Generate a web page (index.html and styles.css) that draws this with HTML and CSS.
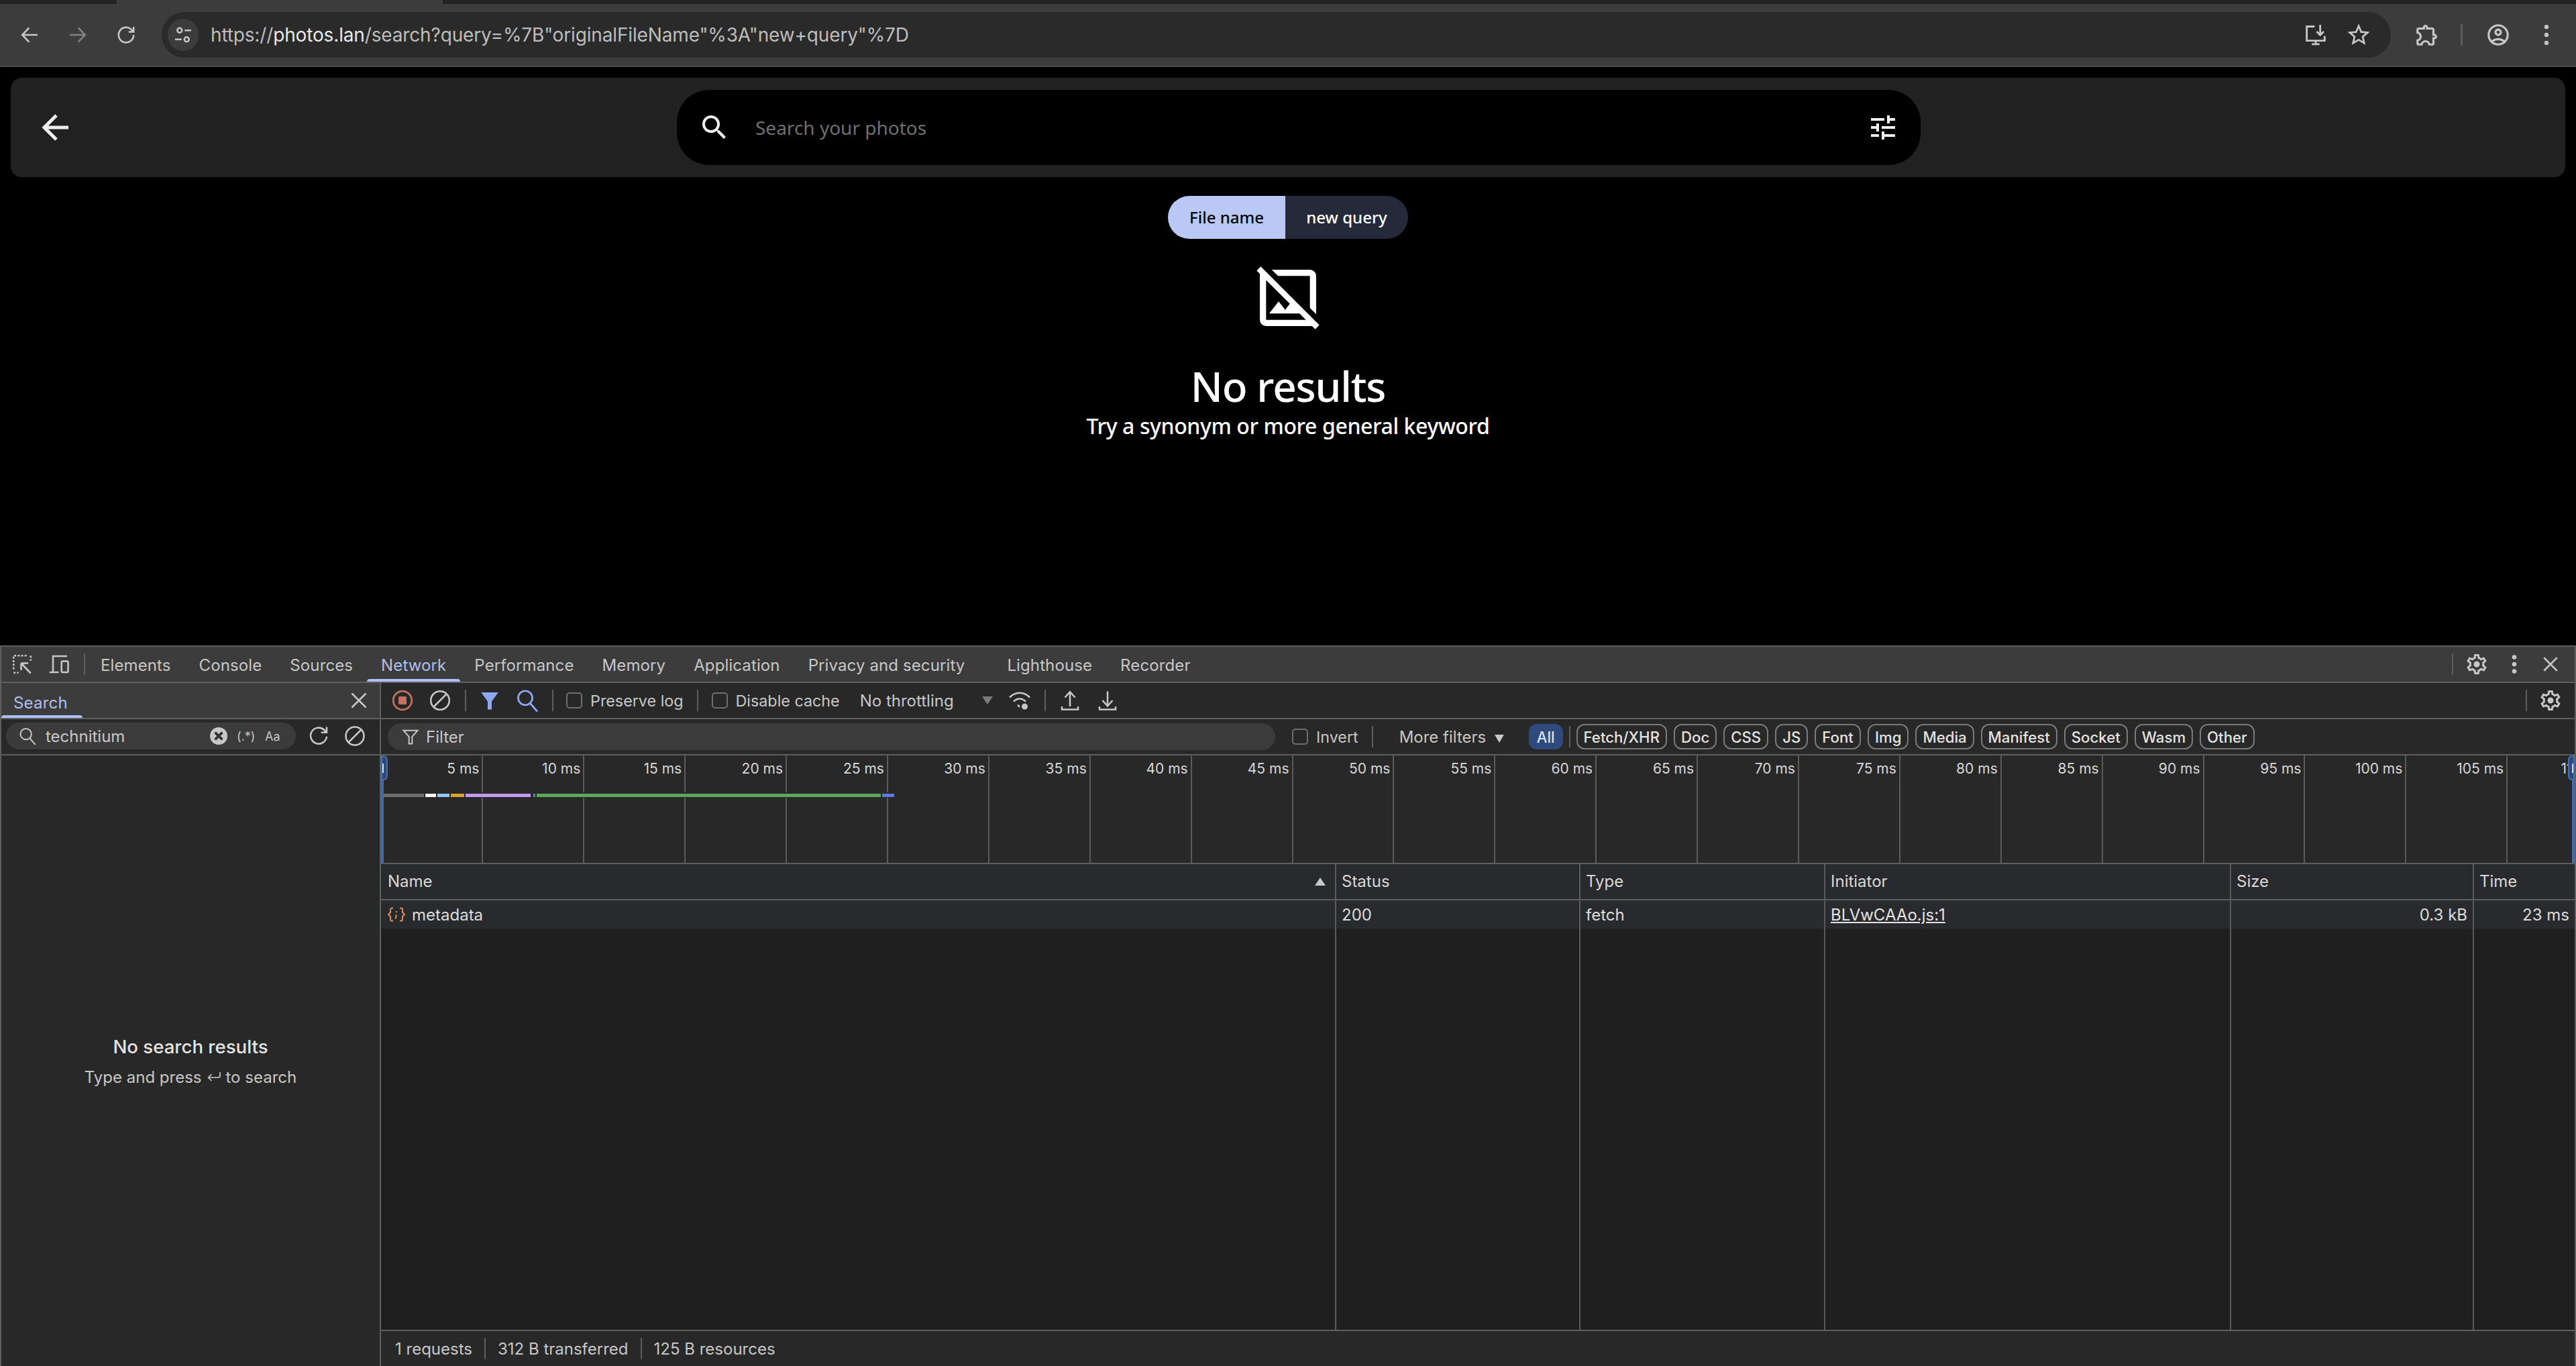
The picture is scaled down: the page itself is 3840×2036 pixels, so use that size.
FILE: index.html
```html
<!DOCTYPE html>
<html lang="en">
<head>
<meta charset="utf-8">
<title>Search - Photos</title>
<link rel="stylesheet" href="styles.css">
</head>
<body>
<div class="browser">
  <div class="tabstrip"><div class="active-tab"></div></div>
  <header class="toolbar">
    <button class="nav-btn"><svg class="i36" viewBox="0 0 24 24"><path class="st" d="M20 12H5M11.5 5 4.800 12l6.700 7"/></svg></button>
    <button class="nav-btn dim"><svg class="i36" viewBox="0 0 24 24"><path class="st" d="M4 12h15M12.500 5l6.700 7-6.700 7"/></svg></button>
    <button class="nav-btn"><svg class="i36" viewBox="0 0 24 24"><path class="st" d="M19.500 12a7.500 7.500 0 1 1-2.300-5.400L19.500 9M19.500 4v5h-5"/></svg></button>
    <div class="omnibox">
      <span class="site-info"><svg class="i36" viewBox="0 0 24 24"><circle class="st" cx="8.500" cy="7.500" r="2.300"/><path class="st" d="M13.500 7.500H20M4 16.500h6.500"/><circle class="st" cx="15.500" cy="16.500" r="2.300"/></svg></span>
      <span class="url">https://<b>photos.lan</b>/search?query=%7B"originalFileName"%3A"new+query"%7D</span>
      <button class="omni-btn"><svg class="i40" viewBox="0 0 24 24"><path class="st" d="M11 4.500H4v12.700h16V13M16 3v9M12.800 9l3.200 3.200L19.200 9M8.500 20.300h7M12 17v3"/></svg></button>
      <button class="omni-btn"><svg class="i40" viewBox="0 0 24 24"><path class="fl" d="M22 9.240l-7.190-.62L12 2 9.190 8.630 2 9.240l5.460 4.730L5.820 21 12 17.270 18.180 21l-1.630-7.030L22 9.240zM12 15.400l-3.760 2.270 1-4.280-3.320-2.880 4.380-.38L12 6.100l1.710 4.040 4.380.38-3.320 2.880 1 4.280L12 15.400z"/></svg></button>
    </div>
    <button class="nav-btn ext"><svg class="i38" viewBox="0 0 24 24"><path class="fl" d="M10.500 4.500c.28 0 .5.220.5.500v2h6v6h2c.28 0 .5.220.5.500s-.220.500-.5.500h-2v6h-2.120c-.68-1.750-2.390-3-4.380-3s-3.700 1.250-4.380 3H4v-2.120c1.750-.68 3-2.390 3-4.380 0-1.990-1.240-3.700-2.990-4.380L4 7h6V5c0-.28.220-.5.500-.5m0-2C9.120 2.500 8 3.620 8 5H4c-1.100 0-1.990.9-1.990 2v3.800h.29c1.490 0 2.700 1.210 2.700 2.700s-1.210 2.700-2.700 2.700H2V20c0 1.100.9 2 2 2h3.800v-.3c0-1.490 1.210-2.700 2.700-2.700s2.700 1.210 2.700 2.700v.3H17c1.100 0 2-.9 2-2v-4c1.380 0 2.500-1.120 2.500-2.500S20.380 11 19 11V7c0-1.100-.9-2-2-2h-4c0-1.380-1.120-2.500-2.500-2.500z"/></svg></button>
    <span class="chrome-sep"></span>
    <button class="nav-btn"><svg class="i38" viewBox="0 0 24 24"><path class="fl" d="M12 2C6.480 2 2 6.480 2 12s4.480 10 10 10 10-4.480 10-10S17.520 2 12 2zM7.350 18.500C8.660 17.560 10.260 17 12 17s3.340.56 4.650 1.500c-1.310.94-2.910 1.500-4.650 1.500s-3.340-.56-4.650-1.500zm10.790-1.380C16.450 15.800 14.320 15 12 15s-4.450.8-6.140 2.120C4.700 15.730 4 13.950 4 12c0-4.420 3.580-8 8-8s8 3.580 8 8c0 1.950-.7 3.730-1.860 5.120zM12 6c-1.930 0-3.500 1.570-3.500 3.500S10.070 13 12 13s3.500-1.570 3.500-3.500S13.930 6 12 6zm0 5c-.83 0-1.500-.67-1.500-1.500S11.170 8 12 8s1.500.67 1.500 1.500S12.830 11 12 11z"/></svg></button>
    <button class="nav-btn"><svg class="i38" viewBox="0 0 24 24"><circle class="fl" cx="12" cy="4.500" r="2"/><circle class="fl" cx="12" cy="12" r="2"/><circle class="fl" cx="12" cy="19.500" r="2"/></svg></button>
  </header>

  <main class="page">
    <div class="page-bar">
      <button class="page-back"><svg class="i60" viewBox="0 0 24 24"><path class="wf" d="M20,11V13H8L13.500,18.500L12.080,19.920L4.160,12L12.080,4.080L13.500,5.500L8,11H20Z"/></svg></button>
      <div class="search-pill">
        <svg class="i48" viewBox="0 0 24 24"><path class="wf" d="M9.500,3A6.500,6.500 0 0,1 16,9.500C16,11.110 15.410,12.590 14.440,13.730L14.710,14H15.500L20.500,19L19,20.500L14,15.500V14.710L13.730,14.440C12.590,15.410 11.110,16 9.500,16A6.500,6.500 0 0,1 3,9.500A6.500,6.500 0 0,1 9.500,3M9.500,5C7,5 5,7 5,9.500C5,12 7,14 9.500,14C12,14 14,12 14,9.500C14,7 12,5 9.500,5Z"/></svg>
        <span class="placeholder">Search your photos</span>
        <svg class="i48" viewBox="0 0 24 24"><path class="wf" d="M3,17V19H9V17H3M3,5V7H13V5H3M13,21V19H21V17H13V15H11V21H13M7,9V11H3V13H7V15H9V9H7M21,13V11H11V13H21M15,9H17V7H21V5H17V3H15V9Z"/></svg>
      </div>
    </div>
    <div class="chip"><span class="chip-key">File name</span><span class="chip-val">new query</span></div>
    <svg class="empty-icon" viewBox="0 0 24 24"><path class="wh" d="M22,20.700L3.300,2L2,3.300L3,4.300V19A2,2 0 0,0 5,21H19.700L20.700,22L22,20.700M5,19V6.300L12.600,13.900L11.100,15.800L9,13.100L6,17H15.700L17.700,19H5M8.800,5L6.800,3H19A2,2 0 0,1 21,5V17.200L19,15.200V5H8.800Z"/></svg>
    <h1 class="empty-title">No results</h1>
    <p class="empty-sub">Try a synonym or more general keyword</p>
  </main>

  <section class="devtools">
    <div class="dt-tabs">
      <button class="dt-btn w54"><svg class="i36" viewBox="0 0 24 24"><path class="st dash" d="M3.500 17V3.500H18"/><path class="st dash" d="M3.500 20.500h5M20.500 3.500v5"/><path class="st" d="M11 11l9.500 10M11 11v7M11 11h7"/></svg></button>
      <button class="dt-btn w56"><svg class="i36" viewBox="0 0 24 24"><path class="st" d="M6 20V4h14M2.500 20h9"/><rect class="st" x="14.500" y="9" width="6.500" height="11" rx="1"/></svg></button>
      <span class="sep tabs-sep"></span>
      <nav class="tab-list">
        <span class="tab">Elements</span>
        <span class="tab">Console</span>
        <span class="tab">Sources</span>
        <span class="tab active">Network</span>
        <span class="tab">Performance</span>
        <span class="tab">Memory</span>
        <span class="tab">Application</span>
        <span class="tab wide">Privacy and security</span>
        <span class="tab">Lighthouse</span>
        <span class="tab">Recorder</span>
      </nav>
      <span class="sep push"></span>
      <button class="dt-btn w56 after-sep"><svg class="i36" viewBox="0 0 24 24"><path class="fl" d="M19.430 12.980c.04-.32.07-.64.07-.98 0-.34-.03-.66-.07-.98l2.110-1.650c.19-.15.24-.42.12-.64l-2-3.460c-.09-.16-.26-.25-.44-.25-.06 0-.12.01-.17.03l-2.490 1c-.52-.4-1.080-.73-1.690-.98l-.38-2.650C14.460 2.180 14.250 2 14 2h-4c-.25 0-.46.180-.49.420l-.38 2.650c-.61.25-1.170.59-1.690.98l-2.490-1c-.06-.02-.12-.03-.18-.03-.17 0-.34.09-.43.25l-2 3.460c-.13.22-.07.49.12.64l2.110 1.650c-.04.32-.07.65-.07.98 0 .33.03.66.07.98l-2.110 1.650c-.19.15-.24.42-.12.64l2 3.460c.09.16.26.25.44.25.06 0 .12-.01.17-.03l2.490-1c.52.4 1.080.73 1.690.98l.38 2.650c.03.24.24.42.49.42h4c.25 0 .46-.18.49-.42l.38-2.650c.61-.25 1.170-.59 1.690-.98l2.490 1c.06.02.12.03.18.03.17 0 .34-.09.43-.25l2-3.460c.12-.22.07-.49-.12-.64l-2.110-1.650zm-1.980-1.710c.04.31.05.52.05.73 0 .21-.02.43-.05.73l-.14 1.130.89.7 1.080.84-.7 1.210-1.270-.51-1.040-.42-.9.68c-.43.32-.84.56-1.250.73l-1.060.43-.16 1.130-.2 1.350h-1.400l-.19-1.350-.16-1.130-1.060-.43c-.43-.18-.83-.41-1.230-.71l-.91-.7-1.060.43-1.270.51-.7-1.210 1.080-.84.89-.7-.14-1.130c-.03-.31-.05-.54-.05-.74s.02-.43.05-.73l.14-1.130-.89-.7-1.080-.84.7-1.210 1.270.51 1.040.42.9-.68c.43-.32.84-.56 1.250-.73l1.060-.43.16-1.130.2-1.350h1.390l.19 1.350.16 1.130 1.060.43c.43.18.83.41 1.230.71l.91.7 1.060-.43 1.270-.51.7 1.210-1.070.85-.89.7.14 1.130z"/><circle class="fl" cx="12" cy="12" r="3"/></svg></button>
      <button class="dt-btn w56"><svg class="i36" viewBox="0 0 24 24"><circle class="fl" cx="12" cy="5" r="2.200"/><circle class="fl" cx="12" cy="12" r="2.200"/><circle class="fl" cx="12" cy="19" r="2.200"/></svg></button>
      <button class="dt-btn w52"><svg class="i36" viewBox="0 0 24 24"><path class="st" d="M5.500 5.500l13 13M18.500 5.500l-13 13"/></svg></button>
    </div>

    <div class="dt-body">
      <aside class="drawer">
        <div class="drawer-head">
          <span class="drawer-title">Search</span>
          <svg class="i36 drawer-close" viewBox="0 0 24 24"><path class="st" d="M5 5l14 14M19 5L5 19"/></svg>
        </div>
        <div class="drawer-search">
          <div class="search-box">
            <svg class="i28" viewBox="0 0 24 24"><circle class="st" cx="10" cy="9.500" r="7"/><path class="st" d="M15 15l7 8"/></svg>
            <span class="search-term">technitium</span>
            <span class="clear-x"><svg viewBox="0 0 24 24"><path class="darkst" d="M7 7l10 10M17 7L7 17"/></svg></span>
            <span class="regex">(.*)</span>
            <span class="case">Aa</span>
          </div>
          <button class="dt-btn w54 refresh"><svg class="i36" viewBox="0 0 24 24"><path class="st" d="M20 12.500a8 8 0 1 1-2.400-6.500L20 8.500M20 3v5.500h-5.500"/></svg></button>
          <button class="dt-btn w54"><svg class="i36" viewBox="0 0 24 24"><circle class="st" cx="12" cy="12" r="9"/><path class="st" d="M6 18L18 6"/></svg></button>
        </div>
        <div class="drawer-empty">
          <strong>No search results</strong>
          <span class="hint">Type and press <svg class="i24" viewBox="0 0 24 24"><path class="st" d="M21 4v5a3 3 0 0 1-3 3H3.500M8.500 7l-5 5 5 5"/></svg> to search</span>
        </div>
      </aside>

      <div class="net">
        <div class="net-bar">
          <button class="dt-btn w56 first"><svg class="i36" viewBox="0 0 24 24"><circle class="rec" cx="12" cy="12" r="9.200"/><rect class="recfill" x="8" y="8" width="8" height="8" rx="1"/></svg></button>
          <button class="dt-btn w56"><svg class="i36" viewBox="0 0 24 24"><circle class="st" cx="12" cy="12" r="9.200"/><path class="st" d="M6 18L18 6"/></svg></button>
          <span class="sep s9"></span>
          <button class="dt-btn w56 m7"><svg class="i36" viewBox="0 0 24 24"><path class="blue" d="M3.500 4h17L14 13v8h-4v-8z"/></svg></button>
          <button class="dt-btn w56"><svg class="i36" viewBox="0 0 24 24"><circle class="bluest" cx="10" cy="9.500" r="7"/><path class="bluest" d="M15 15l7 8"/></svg></button>
          <span class="sep s9"></span>
          <label class="check first-check"><span class="box"></span>Preserve log</label>
          <span class="sep s20"></span>
          <label class="check s20"><span class="box"></span>Disable cache</label>
          <div class="throttle"><span>No throttling</span><i class="caret"></i></div>
          <button class="dt-btn w56 wifi"><svg class="i36" viewBox="0 0 24 24"><path class="st" d="M2 9c6-6 14-6 20 0M6 13c3.500-3.500 8.500-3.500 12 0M10 16.500l2 2"/><circle class="fl" cx="17" cy="18" r="3"/></svg></button>
          <span class="sep s9"></span>
          <button class="dt-btn w56 up"><svg class="i36" viewBox="0 0 24 24"><path class="st" d="M12 18V3.500M7 9l5-5.500 5 5.500M4 18v3h16v-3"/></svg></button>
          <button class="dt-btn w56"><svg class="i36" viewBox="0 0 24 24"><path class="st" d="M12 3v14.500M7 12l5 5.500 5-5.500M4 18v3h16v-3"/></svg></button>
          <span class="sep push"></span>
          <button class="dt-btn w56 end after-sep"><svg class="i36" viewBox="0 0 24 24"><path class="fl" d="M19.430 12.980c.04-.32.07-.64.07-.98 0-.34-.03-.66-.07-.98l2.110-1.650c.19-.15.24-.42.12-.64l-2-3.460c-.09-.16-.26-.25-.44-.25-.06 0-.12.01-.17.03l-2.490 1c-.52-.4-1.080-.73-1.690-.98l-.38-2.650C14.460 2.180 14.250 2 14 2h-4c-.25 0-.46.180-.49.420l-.38 2.650c-.61.25-1.170.59-1.690.98l-2.490-1c-.06-.02-.12-.03-.18-.03-.17 0-.34.09-.43.25l-2 3.460c-.13.22-.07.49.12.64l2.110 1.650c-.04.32-.07.65-.07.98 0 .33.03.66.07.98l-2.110 1.650c-.19.15-.24.42-.12.64l2 3.460c.09.16.26.25.44.25.06 0 .12-.01.17-.03l2.490-1c.52.4 1.080.73 1.690.98l.38 2.650c.03.24.24.42.49.42h4c.25 0 .46-.18.49-.42l.38-2.650c.61-.25 1.170-.59 1.690-.98l2.490 1c.06.02.12.03.18.03.17 0 .34-.09.43-.25l2-3.460c.12-.22.07-.49-.12-.64l-2.110-1.650zm-1.980-1.710c.04.31.05.52.05.73 0 .21-.02.43-.05.73l-.14 1.130.89.7 1.080.84-.7 1.210-1.270-.51-1.040-.42-.9.68c-.43.32-.84.56-1.250.73l-1.060.43-.16 1.130-.2 1.350h-1.400l-.19-1.350-.16-1.130-1.060-.43c-.43-.18-.83-.41-1.230-.71l-.91-.7-1.060.43-1.270.51-.7-1.210 1.080-.84.89-.7-.14-1.130c-.03-.31-.05-.54-.05-.74s.02-.43.05-.73l.14-1.130-.89-.7-1.080-.84.7-1.210 1.270.51 1.040.42.9-.68c.43-.32.84-.56 1.250-.73l1.060-.43.16-1.130.2-1.350h1.390l.19 1.350.16 1.130 1.060.43c.43.18.83.41 1.230.71l.91.7 1.060-.43 1.270-.51.7 1.210-1.070.85-.89.7.14 1.130z"/><circle class="fl" cx="12" cy="12" r="3"/></svg></button>
        </div>

        <div class="net-bar">
          <div class="filter-box">
            <svg class="i28" viewBox="0 0 24 24"><path class="st" d="M3 4h18l-7 8v9h-4v-9z"/></svg>
            <span class="filter-text">Filter</span>
          </div>
          <label class="check invert"><span class="box"></span>Invert</label>
          <span class="sep s20"></span>
          <span class="more">More filters <i class="caret light"></i></span>
          <span class="type on">All</span>
          <span class="sep type-sep"></span>
          <span class="type">Fetch/XHR</span>
          <span class="type">Doc</span>
          <span class="type">CSS</span>
          <span class="type">JS</span>
          <span class="type">Font</span>
          <span class="type">Img</span>
          <span class="type">Media</span>
          <span class="type">Manifest</span>
          <span class="type">Socket</span>
          <span class="type">Wasm</span>
          <span class="type">Other</span>
        </div>

        <div class="overview">
          <div class="ticks">
            <span class="tick">5 ms</span><span class="tick">10 ms</span><span class="tick">15 ms</span><span class="tick">20 ms</span><span class="tick">25 ms</span><span class="tick">30 ms</span><span class="tick">35 ms</span><span class="tick">40 ms</span><span class="tick">45 ms</span><span class="tick">50 ms</span><span class="tick">55 ms</span><span class="tick">60 ms</span><span class="tick">65 ms</span><span class="tick">70 ms</span><span class="tick">75 ms</span><span class="tick">80 ms</span><span class="tick">85 ms</span><span class="tick">90 ms</span><span class="tick">95 ms</span><span class="tick">100 ms</span><span class="tick">105 ms</span><span class="tick">110 ms</span>
          </div>
          <div class="waterfall">
            <i class="seg s-gray"></i><i class="seg s-white"></i><i class="seg s-sky"></i><i class="seg s-gold"></i><i class="seg s-purple"></i><i class="seg s-tiny"></i><i class="seg s-green"></i><i class="seg s-blue"></i>
          </div>
          <div class="handle left"><i></i></div>
          <div class="handle right"><i></i></div>
        </div>

        <div class="table">
          <div class="col c-name">
            <div class="head">Name<svg class="sort" viewBox="0 0 16 12"><path d="M8 0l8 12H0z"/></svg></div>
            <div class="cell"><svg class="json" viewBox="0 0 26 22"><path d="M8 1.500H6a2 2 0 0 0-2 2v4.500l-3 3 3 3v4.500a2 2 0 0 0 2 2h2M18 1.500h2a2 2 0 0 1 2 2v4.500l3 3-3 3v4.500a2 2 0 0 1-2 2h-2M13 6v2M12 11.500v.5M13 11.500l-1.500 6"/></svg><span>metadata</span></div>
            <div class="fill"></div>
          </div>
          <div class="col c-status"><div class="head">Status</div><div class="cell">200</div><div class="fill"></div></div>
          <div class="col c-type"><div class="head">Type</div><div class="cell">fetch</div><div class="fill"></div></div>
          <div class="col c-init"><div class="head">Initiator</div><div class="cell"><a class="link">BLVwCAAo.js:1</a></div><div class="fill"></div></div>
          <div class="col c-size"><div class="head">Size</div><div class="cell right">0.3 kB</div><div class="fill"></div></div>
          <div class="col c-time"><div class="head">Time</div><div class="cell right">23 ms</div><div class="fill"></div></div>
        </div>

        <footer class="status">
          <span>1 requests</span><span class="sep"></span><span>312 B transferred</span><span class="sep"></span><span>125 B resources</span>
        </footer>
      </div>
    </div>
  </section>
</div>
</body>
</html>
```
FILE: styles.css
```css
* { box-sizing: border-box; }
html, body { margin: 0; padding: 0; background: #000; }
body { width: 3840px; height: 2036px; overflow: hidden; font-family: Inter, "Liberation Sans", sans-serif; color: #c7c7c7; }
button { background: none; border: 0; padding: 0; margin: 0; color: inherit; display: flex; align-items: center; justify-content: center; flex: none; }
svg { display: block; flex: none; }
h1, p { margin: 0; }

.i24 { width: 24px; height: 24px; }
.i28 { width: 28px; height: 28px; }
.i36 { width: 36px; height: 36px; }
.i38 { width: 38px; height: 38px; }
.i40 { width: 40px; height: 40px; }
.i48 { width: 48px; height: 48px; }
.i60 { width: 60px; height: 60px; }

.st { fill: none; stroke: #c7c7c7; stroke-width: 1.7; }
.dash { stroke-dasharray: 2 1.500; }
.fl { fill: #c7c7c7; }
.wf { fill: #eee; }
.wh { fill: #fff; }
.darkst { fill: none; stroke: #333; stroke-width: 3.500; }
.rec { fill: none; stroke: #c4715f; stroke-width: 1.800; }
.recfill { fill: #c4715f; }
.blue { fill: #8ea8f5; }
.bluest { fill: none; stroke: #8ea8f5; stroke-width: 1.800; }

.browser { display: flex; flex-direction: column; height: 2036px; }

.tabstrip { height: 6px; background: #222; flex: none; position: relative; }
.active-tab { position: absolute; left: 174px; width: 486px; top: 0; height: 6px; background: #3c3c3c; }

.toolbar { height: 94px; flex: none; background: #3c3c3c; border-bottom: 2px solid #4a4a4a; display: flex; align-items: center; padding: 0 8px; }
.nav-btn { width: 72px; height: 72px; }
.nav-btn.dim { opacity: .5; }
.nav-btn.ext { margin-left: 18px; }
.omnibox { margin-left: 17px; width: 3323px; height: 68px; background: #2a2a2a; border-radius: 34px; display: flex; align-items: center; padding: 0 16px 0 9px; }
.site-info { width: 46px; height: 48px; border-radius: 24px; background: #3c3c3c; display: flex; align-items: center; justify-content: center; flex: none; }
.url { margin-left: 18px; flex: 1; font-size: 28px; letter-spacing: -.15px; color: #bdbdbd; white-space: nowrap; }
.url b { font-weight: 400; color: #e8e8e8; }
.omni-btn { width: 64px; height: 64px; }
.chrome-sep { width: 3px; height: 32px; background: #5c5c5c; margin-left: 14px; margin-right: 17px; flex: none; }

.page { height: 862px; flex: none; background: #000; padding-top: 16px; display: flex; flex-direction: column; align-items: center; font-family: "Noto Sans", sans-serif; color: #fff; }
.page-bar { width: 3808px; height: 148px; flex: none; background: #212121; border-radius: 16px; position: relative; display: flex; align-items: center; justify-content: center; }
.page-back { position: absolute; left: 36px; top: 44px; }
.search-pill { width: 1854px; height: 112px; margin-left: 32px; background: #000; border-radius: 48px; display: flex; align-items: center; padding: 0 32px; }
.placeholder { flex: 1; margin-left: 37px; font-size: 28px; color: #6f6f6f; }
.chip { margin-top: 28px; height: 64px; display: flex; border-radius: 32px; overflow: hidden; font-size: 24px; font-weight: 500; flex: none; }
.chip-key { width: 175px; display: flex; align-items: center; justify-content: center; background: #bac8f5; color: #000; padding-bottom: 2px; }
.chip-val { width: 183px; display: flex; align-items: center; justify-content: center; background: #252a3a; color: #fff; padding-bottom: 2px; }
.empty-icon { width: 112px; height: 112px; margin-top: 32px; flex: none; }
.empty-title { margin-top: 35px; font-size: 62px; line-height: 80px; font-weight: 500; letter-spacing: -1.2px; }
.empty-sub { font-size: 32px; line-height: 44px; font-weight: 500; margin-top: -2px; letter-spacing: -.4px; }

.devtools { flex: 1; min-height: 0; display: flex; flex-direction: column; border-top: 2px solid #5e5e5e; border-left: 2px solid #5e5e5e; border-right: 2px solid #5e5e5e; font-size: 24px; }
.dt-btn { height: 52px; }
.w52 { width: 52px; }
.w54 { width: 54px; }
.w56 { width: 56px; }
.sep { width: 2px; height: 32px; background: #5e5e5e; flex: none; }
.push { margin-left: auto; }
.after-sep { margin-left: 7px; }

.dt-tabs { height: 54px; flex: none; background: #3c3c3c; border-bottom: 2px solid #5e5e5e; display: flex; align-items: center; padding: 0 10px 0 4px; }
.tabs-sep { margin-left: 9px; margin-right: 2px; }
.tab-list { display: flex; height: 52px; }
.tab { padding: 0 21px; line-height: 56px; position: relative; white-space: nowrap; letter-spacing: .11px; }
.tab.wide { margin-right: 21px; }
.tab.active { color: #aebff5; }
.tab.active::after { content: ""; position: absolute; left: 0; right: 0; bottom: 0; height: 4px; border-radius: 4px 4px 0 0; background: #aebff5; }

.dt-body { flex: 1; min-height: 0; display: flex; }

.drawer { width: 566px; flex: none; background: #282828; border-right: 2px solid #5e5e5e; display: flex; flex-direction: column; }
.drawer-head { height: 54px; flex: none; background: #3c3c3c; border-bottom: 2px solid #5e5e5e; display: flex; align-items: center; justify-content: space-between; padding: 0 13px 0 18px; position: relative; }
.drawer-title { color: #aebff5; padding-top: 6px; letter-spacing: .2px; }
.drawer-head::after { content: ""; position: absolute; left: 0; width: 121px; bottom: 0; height: 4px; border-radius: 4px 4px 0 0; background: #aebff5; }
.drawer-search { height: 54px; flex: none; border-bottom: 2px solid #5e5e5e; display: flex; align-items: center; padding: 0 0 2px 7px; }
.search-box { width: 432px; height: 40px; border-radius: 20px; background: #3b3b3b; display: flex; align-items: center; padding: 0 0 0 18px; flex: none; }
.search-term { margin-left: 13px; width: 245px; }
.clear-x { width: 26px; height: 26px; border-radius: 13px; background: #c7c7c7; flex: none; }
.regex { font-size: 18px; margin-left: 14px; width: 42px; }
.case { font-size: 18px; }
.refresh { margin-left: 7px; }
.drawer-empty { flex: 1; display: flex; flex-direction: column; align-items: center; justify-content: center; padding-top: 4px; }
.drawer-empty strong { font-size: 27.600px; font-weight: 500; color: #e3e3e3; line-height: 36px; margin-bottom: 10px; }
.hint { display: flex; align-items: center; gap: 6px; line-height: 36px; }

.net { flex: 1; min-width: 0; display: flex; flex-direction: column; }
.net-bar { height: 54px; flex: none; background: #282828; border-bottom: 2px solid #5e5e5e; display: flex; align-items: center; }
.first { margin-left: 4px; }
.s9 { margin-left: 9px; }
.m7 { margin-left: 7px; }
.s20 { margin-left: 20px; }
.check { display: flex; align-items: center; gap: 12px; white-space: nowrap; font-size: 23.300px; }
.first-check { margin-left: 19px; }
.box { width: 24px; height: 24px; border: 2px solid #6e6e6e; border-radius: 5px; flex: none; }
.throttle { margin-left: 30px; width: 198px; display: flex; justify-content: space-between; align-items: center; white-space: nowrap; font-size: 24px; }
.caret { width: 0; height: 0; border-left: 8px solid transparent; border-right: 8px solid transparent; border-top: 12px solid #7b7b7b; display: inline-block; }
.caret.light { border-top-color: #c7c7c7; border-left-width: 7px; border-right-width: 7px; margin-left: 6px; }
.wifi { margin-left: 12px; }
.up { margin-left: 8px; }
.end { margin-right: 8px; }

.filter-box { margin-left: 10px; width: 1323px; height: 40px; border-radius: 20px; background: #3b3b3b; display: flex; align-items: center; padding-left: 20px; flex: none; }
.filter-text { margin-left: 9px; }
.invert { margin-left: 25px; }
.more { margin-left: 39px; width: 193px; white-space: nowrap; }
.type { height: 38px; margin-left: 10px; padding: 0 9px; border: 2px solid #7a7a7a; border-radius: 12px; display: flex; align-items: center; color: #e3e3e3; font-weight: 500; font-size: 22.200px; white-space: nowrap; flex: none; }
.type.on { background: #2f4a7c; border-color: #2f4a7c; color: #d3e3ff; padding: 0 10px; margin-left: 0; }
.type-sep { margin-left: 9px; margin-right: -1px; }

.overview { height: 162px; flex: none; background: #282828; border-bottom: 2px solid #5e5e5e; position: relative; overflow: hidden; }
.ticks { display: flex; height: 160px; padding-left: 1.500px; }
.tick { width: 150.900px; flex: none; border-right: 2px solid #5a5a5a; text-align: right; padding: 6px 4px 0 0; font-size: 21px; color: #d8d8d8; line-height: 28px; white-space: nowrap; }
.waterfall { position: absolute; left: 2px; top: 55px; height: 8px; padding-top: 2px; display: flex; background: #282828; width: 767px; align-items: flex-start; }
.seg { height: 5px; display: block; flex: none; margin-right: 2px; }
.s-gray { width: 62px; background: #6d6d6d; }
.s-white { width: 16px; background: #fff; }
.s-sky { width: 18px; background: #8fc8f7; }
.s-gold { width: 20px; background: #d4a82e; }
.s-purple { width: 97px; background: #c09af0; margin-right: 4px; }
.s-tiny { width: 3px; background: #4a8fa8; }
.s-green { width: 513px; background: #5da75d; }
.s-blue { width: 18px; background: #5f78dd; margin-right: 0; }
.handle { position: absolute; top: 0; width: 10px; height: 37px; background: #2e4a7d; border: 2px solid #4a6faa; }
.handle i { position: absolute; top: 10px; height: 14px; width: 2px; background: #cfdcf5; }
.handle.left { left: 0; border-radius: 0 6px 6px 0; }
.handle.left i { left: 0; }
.handle.right { right: 0; border-radius: 6px 0 0 6px; }
.handle.right i { right: 0; }
.overview::before, .overview::after { content: ""; position: absolute; top: 0; bottom: 0; width: 4px; background: #3f6cae; z-index: 1; }
.overview::before { left: 0; }
.overview::after { right: 0; }
.handle { z-index: 2; }

.table { flex: 1; min-height: 0; display: flex; background: #1f1f1f; }
.col { display: flex; flex-direction: column; flex: none; border-right: 2px solid #5a5a5a; }
.c-name { width: 1424px; }
.c-status { width: 364px; }
.c-type { width: 365px; }
.c-init { width: 605px; }
.c-size { width: 362px; }
.c-time { width: 150px; border-right: 0; }
.head { height: 54px; flex: none; background: #292a2d; border-bottom: 2px solid #5e5e5e; display: flex; align-items: center; padding: 0 8px; color: #d8d8d8; line-height: 50px; }
.cell { height: 42px; flex: none; background: #292a2d; display: flex; align-items: center; padding: 0 8px; color: #dcdcdc; }
.cell.right { justify-content: flex-end; padding-right: 8px; }
.c-time .cell.right { padding-right: 8px; }
.c-name .head, .c-name .cell { padding-left: 10px; }
.sort { width: 16px; height: 12px; margin-left: auto; margin-right: 6px; fill: #c7c7c7; }
.json { width: 26px; height: 22px; margin-right: 10px; fill: none; stroke: #d9914d; stroke-width: 2; }
.link { text-decoration: underline; color: #e3e3e3; }
.fill { flex: 1; }

.status { height: 54px; flex: none; background: #282828; border-top: 2px solid #5e5e5e; display: flex; align-items: center; padding-left: 21px; gap: 18px; color: #c7c7c7; font-size: 24px; }
```
